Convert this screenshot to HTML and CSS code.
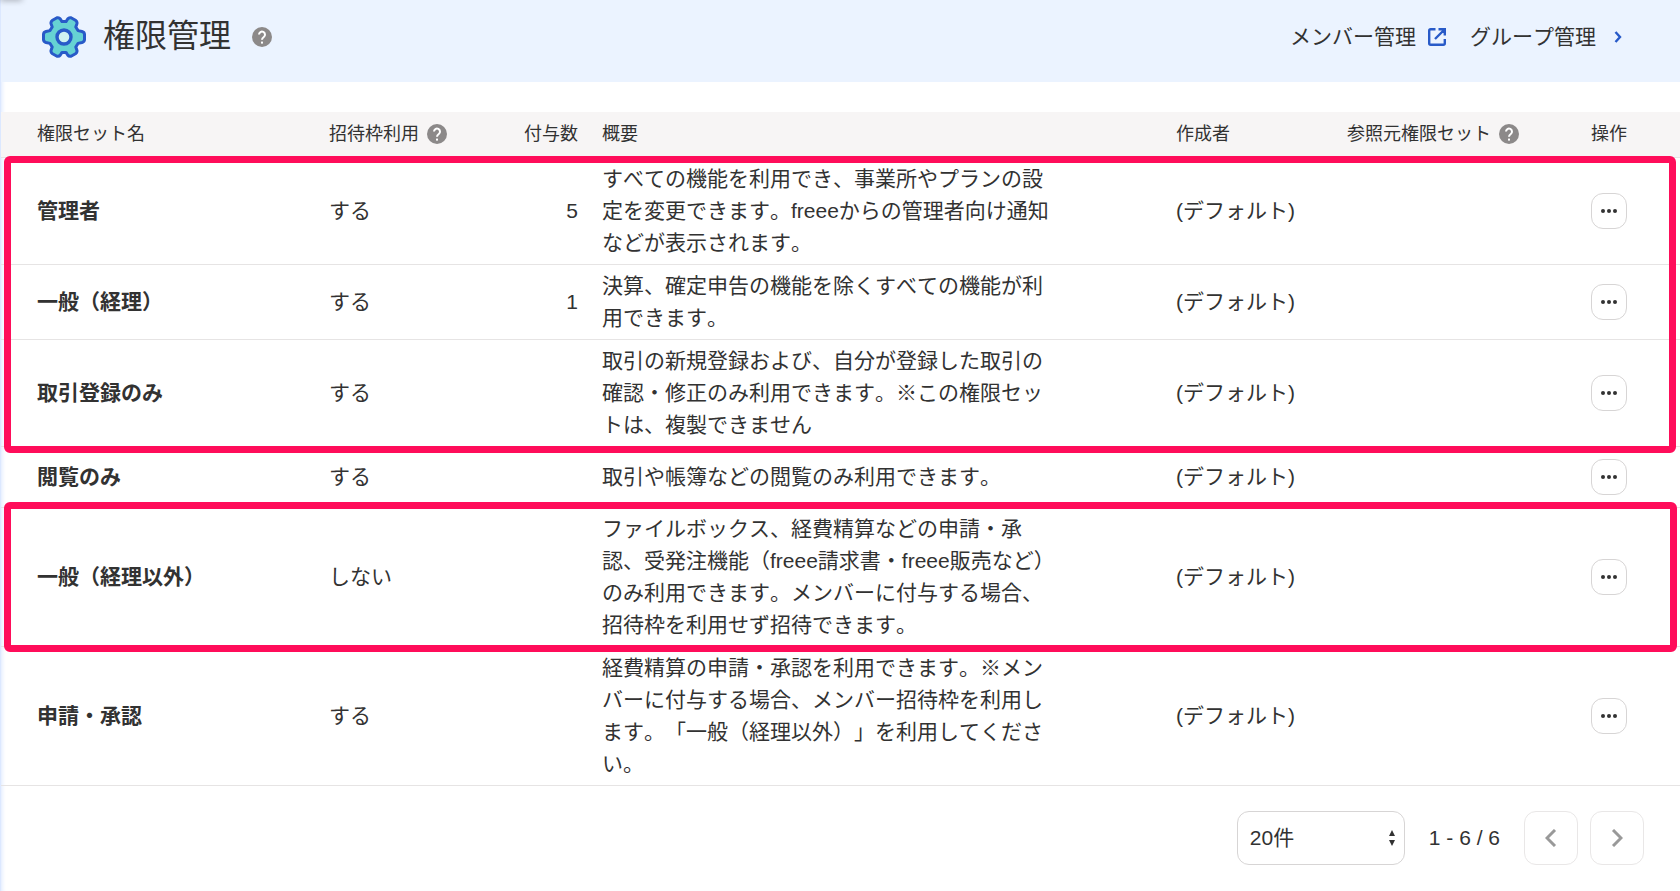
FILE: index.html
```html
<!DOCTYPE html>
<html lang="ja">
  <head>
    <meta charset="utf-8">
    <title>権限管理</title>
    <link rel="stylesheet" href="styles.css">
  </head>
  <body>
    <!-- shared icons -->
    <svg class="sprite" aria-hidden="true">
      <symbol id="help" viewBox="0 0 20 20">
        <circle cx="10" cy="10" r="10" fill="#8c8989"/>
        <path d="M7 7.6a3 3 0 1 1 4.800 2.400c-1.100.800-1.800 1.300-1.800 2.800" fill="none" stroke="#fff" stroke-width="2"/>
        <rect x="9" y="14.600" width="2" height="2" fill="#fff"/>
      </symbol>
      <symbol id="dots" viewBox="0 0 16 4">
        <circle cx="2" cy="2" r="2"/>
        <circle cx="8" cy="2" r="2"/>
        <circle cx="14" cy="2" r="2"/>
      </symbol>
    </svg>

    <header class="page-header">
      <svg class="gear" viewBox="0 0 44 42">
        <path d="M15 1.8Q17 1.2 18.3 3L20 5.6H24L25.700 3Q27 1.200 29 1.800L33.500 4.300Q35.500 5.700 34.900 7.700L33.800 10.900L36 14.600L40 15.500Q42.500 16.200 42.500 18.500V23.500Q42.500 25.800 40 26.500L36 27.400L33.800 31.100L34.900 34.300Q35.500 36.300 33.500 37.700L29 40.200Q27 40.800 25.700 39L24 36.400H20L18.300 39Q17 40.800 15 40.200L10.500 37.700Q8.500 36.300 9.100 34.300L10.200 31.100L8 27.400L4 26.500Q1.500 25.800 1.500 23.500V18.500Q1.500 16.200 4 15.500L8 14.600L10.200 10.900L9.100 7.700Q8.500 5.700 10.500 4.300Z" fill="#66d2d3" stroke="#285ac8" stroke-width="3" stroke-linejoin="round"/>
        <circle cx="22" cy="21" r="7" fill="#cff1f1" stroke="#285ac8" stroke-width="3.400"/>
      </svg>
      <h1>権限管理</h1>
      <svg class="help"><use href="#help"/></svg>
      <nav>
        <a href="#">メンバー管理
          <svg class="external" viewBox="0 0 18 18"><path d="M7.500 1.200H2.700Q1.200 1.200 1.200 2.700V15.300Q1.200 16.800 2.700 16.800H15.300Q16.800 16.800 16.800 15.300V11M10.500 1.200H16.800V7.500M16.500 1.500L7 11"/></svg>
        </a>
        <a href="#">グループ管理
          <svg class="chevron" viewBox="0 0 8 12"><path d="M1.500 1L6 6L1.500 11"/></svg>
        </a>
      </nav>
    </header>

    <main>
      <table>
        <colgroup>
          <col class="col-name">
          <col class="col-invite">
          <col class="col-count">
          <col>
          <col class="col-author">
          <col class="col-source">
          <col class="col-action">
        </colgroup>
        <thead>
          <tr>
            <th>権限セット名</th>
            <th>招待枠利用 <svg class="help"><use href="#help"/></svg></th>
            <th class="count">付与数</th>
            <th>概要</th>
            <th>作成者</th>
            <th>参照元権限セット <svg class="help"><use href="#help"/></svg></th>
            <th>操作</th>
          </tr>
        </thead>
        <tbody class="marked accounting">
          <tr>
            <th scope="row">管理者</th>
            <td>する</td>
            <td class="count">5</td>
            <td><p>すべての機能を利用でき、事業所やプランの設定を変更できます。freeeからの管理者向け通知などが表示されます。</p></td>
            <td>(デフォルト)</td>
            <td></td>
            <td><button class="more" aria-label="操作"><svg><use href="#dots"/></svg></button></td>
          </tr>
          <tr>
            <th scope="row">一般（経理）</th>
            <td>する</td>
            <td class="count">1</td>
            <td><p>決算、確定申告の機能を除くすべての機能が利用できます。</p></td>
            <td>(デフォルト)</td>
            <td></td>
            <td><button class="more" aria-label="操作"><svg><use href="#dots"/></svg></button></td>
          </tr>
          <tr>
            <th scope="row">取引登録のみ</th>
            <td>する</td>
            <td class="count"></td>
            <td><p>取引の新規登録および、自分が登録した取引の確認・修正のみ利用できます。※この権限セットは、複製できません</p></td>
            <td>(デフォルト)</td>
            <td></td>
            <td><button class="more" aria-label="操作"><svg><use href="#dots"/></svg></button></td>
          </tr>
        </tbody>
        <tbody>
          <tr>
            <th scope="row">閲覧のみ</th>
            <td>する</td>
            <td class="count"></td>
            <td><p>取引や帳簿などの閲覧のみ利用できます。</p></td>
            <td>(デフォルト)</td>
            <td></td>
            <td><button class="more" aria-label="操作"><svg><use href="#dots"/></svg></button></td>
          </tr>
        </tbody>
        <tbody class="marked general">
          <tr>
            <th scope="row">一般（経理以外）</th>
            <td>しない</td>
            <td class="count"></td>
            <td><p>ファイルボックス、経費精算などの申請・承認、受発注機能（freee請求書・freee販売など）のみ利用できます。メンバーに付与する場合、招待枠を利用せず招待できます。</p></td>
            <td>(デフォルト)</td>
            <td></td>
            <td><button class="more" aria-label="操作"><svg><use href="#dots"/></svg></button></td>
          </tr>
        </tbody>
        <tbody>
          <tr>
            <th scope="row">申請・承認</th>
            <td>する</td>
            <td class="count"></td>
            <td><p>経費精算の申請・承認を利用できます。※メンバーに付与する場合、メンバー招待枠を利用します。「一般（経理以外）」を利用してください。</p></td>
            <td>(デフォルト)</td>
            <td></td>
            <td><button class="more" aria-label="操作"><svg><use href="#dots"/></svg></button></td>
          </tr>
        </tbody>
      </table>

      <div class="pager">
        <div class="per-page">
          <select aria-label="表示件数">
            <option>20件</option>
            <option>50件</option>
            <option>100件</option>
          </select>
          <svg viewBox="0 0 6 16"><path d="M3 0L6 6H0ZM3 16L0 10H6Z"/></svg>
        </div>
        <span>1 - 6 / 6</span>
        <div class="pages">
          <button aria-label="前へ"><svg viewBox="0 0 12 18"><path d="M10 1L2 9L10 17"/></svg></button>
          <button aria-label="次へ"><svg viewBox="0 0 12 18"><path d="M2 1L10 9L2 17"/></svg></button>
        </div>
      </div>
    </main>
  </body>
</html>
```
FILE: styles.css
```css
* { margin: 0; padding: 0; box-sizing: border-box; }

body {
  min-height: 100vh;
  border-left: 1px solid #dce8ff;
  background: #fff;
  box-shadow: inset 4px 0 4px -3px #dce8ff;
  color: #323232;
  font: 21px/32px "Liberation Sans", "Noto Sans CJK JP", sans-serif;
  font-kerning: none;
  text-spacing-trim: space-all;
}

/* edge of the bar above the page */
body::before {
  content: '';
  position: absolute;
  top: -4px;
  left: 0;
  width: 22px;
  height: 4px;
  box-shadow: 0 0 6px #00000066;
}

.sprite { position: absolute; width: 0; height: 0; }
.help { width: 20px; height: 20px; flex: none; }

/* header */
.page-header {
  display: flex;
  align-items: center;
  height: 82px;
  padding: 0 58px 8px 41px;
  background: #ebf3ff;
}
.page-header h1 { margin: 0 21px 2px 17px; font-size: 32px; font-weight: normal; }
.gear { width: 44px; height: 42px; }

nav { display: flex; gap: 24px; margin-left: auto; }
nav a { display: flex; align-items: center; gap: 12px; color: inherit; text-decoration: none; }
nav svg { fill: none; stroke: #285ac8; stroke-width: 2.4; }
.external { width: 18px; height: 18px; }
.chevron { width: 8px; height: 12px; margin-left: 6px; }

/* table */
table { width: 100%; margin-top: 30px; border-collapse: separate; border-spacing: 0; table-layout: fixed; }
.col-name { width: 316px; }
.col-invite { width: 180px; }
.col-count { width: 93px; }
.col-author { width: 171px; }
.col-source { width: 244px; }
.col-action { width: 101px; }

th, td { padding: 5px 12px; border-bottom: 1px solid #e6e4e4; text-align: left; vertical-align: middle; }
th:first-child { padding-left: 36px; }
thead th { height: 46px; padding-bottom: 7px; background: #f7f5f5; font-size: 18px; font-weight: normal; white-space: nowrap; }
thead .help { margin-left: 3px; vertical-align: -4px; }
tbody tr { height: 61px; }
td p { max-width: 458px; }
.count { text-align: right; }

/* highlighted groups of rows */
.marked { position: relative; }
.marked::after {
  content: '';
  position: absolute;
  border: 7px solid #ff0d5a;
  border-radius: 6px;
  pointer-events: none;
}
.accounting::after { inset: -2px 4px -6px 3px; }
.general::after { inset: -6px 3px -5px 3px; }

button { display: flex; align-items: center; justify-content: center; background: #fff; border: 1px solid #e9e7e7; }
.more { width: 36px; height: 36px; border-color: #d7d5d5; border-radius: 12px; }
.more svg { width: 16px; height: 4px; fill: #323232; }

/* pager */
.pager { display: flex; align-items: center; justify-content: flex-end; gap: 24px; padding: 25px 36px; }
.per-page { position: relative; }
.per-page svg { position: absolute; top: 19px; right: 10px; width: 6px; height: 16px; fill: #323232; pointer-events: none; }
select {
  display: block;
  width: 168px;
  height: 54px;
  padding: 0 12px;
  border: 1px solid #d7d5d5;
  border-radius: 12px;
  background: #fff;
  color: inherit;
  font: inherit;
  appearance: none;
}
.pages { display: flex; gap: 12px; }
.pages button { width: 54px; height: 54px; border-radius: 12px; }
.pages svg { width: 12px; height: 18px; fill: none; stroke: #999; stroke-width: 3; }
```
